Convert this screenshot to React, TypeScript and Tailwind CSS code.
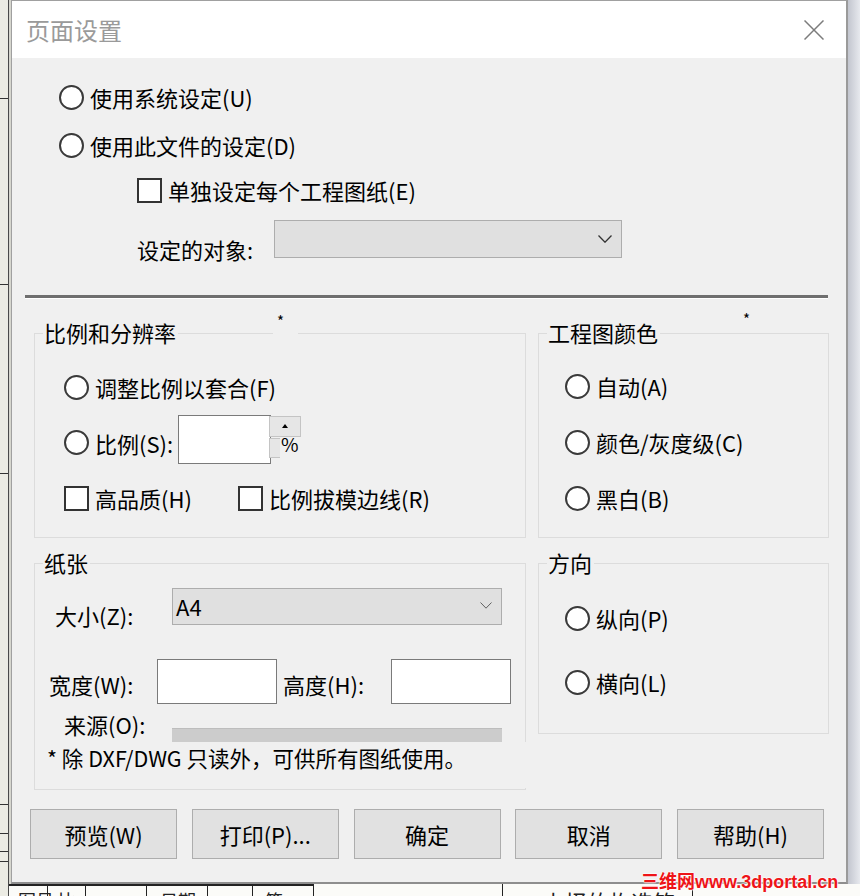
import React from "react";

const FONT = "font-['Noto_Sans_CJK_SC','Noto_Sans',sans-serif]";

function Radio({ label }: { label: string }) {
  return (
    <div className="flex items-center h-[26px]">
      <span className="block w-[25px] h-[25px] rounded-full border-2 border-[#3a3a3a] bg-white shrink-0" />
      <span className="ml-[6px] text-[22px] leading-[26px] text-black whitespace-nowrap">{label}</span>
    </div>
  );
}

function Check({ label }: { label: string }) {
  return (
    <div className="flex items-center h-[26px]">
      <span className="block w-[25px] h-[25px] border-2 border-[#333] bg-white shrink-0" />
      <span className="ml-[6px] text-[22px] leading-[26px] text-black whitespace-nowrap">{label}</span>
    </div>
  );
}

function Chevron({ w, h, color, sw }: { w: number; h: number; color: string; sw: number }) {
  return (
    <svg width={w} height={h} viewBox={`0 0 ${w} ${h}`} className="shrink-0">
      <polyline points={`0.5,0.5 ${w / 2},${h - 0.8} ${w - 0.5},0.5`} fill="none" stroke={color} strokeWidth={sw} />
    </svg>
  );
}

function Group({
  title,
  className,
  children,
}: {
  title: string;
  className: string;
  children: React.ReactNode;
}) {
  return (
    <div className={`relative border border-[#dcdcdc] ${className}`}>
      <span className="absolute left-[8px] top-[-14px] bg-[#f0f0f0] pl-px pr-[2px] text-[22px] leading-[24px] text-black">
        {title}
      </span>
      {children}
    </div>
  );
}

function Button({ label }: { label: string }) {
  return (
    <div className="w-[147px] h-[50px] flex items-center justify-center bg-[#e1e1e1] border border-[#adadad] text-[22px] leading-[26px] text-black">
      {label}
    </div>
  );
}

export default function App() {
  return (
    <div className={`relative w-[860px] h-[896px] overflow-hidden bg-[#ecece4] ${FONT}`}>
      {/* drawing sheet behind the dialog */}
      <div className="absolute left-[8px] top-0 w-px h-[896px] bg-[#4a4a4a]" />
      <div className="absolute left-[9px] top-0 w-[2px] h-[896px] bg-[#d6d6ce]" />
      <div className="absolute left-0 top-[98px] w-[8px] h-px bg-[#333]" />
      <div className="absolute left-0 top-[284px] w-[8px] h-px bg-[#333]" />
      <div className="absolute left-0 top-[473px] w-[8px] h-px bg-[#333]" />
      <div className="absolute left-0 top-[804px] w-[8px] h-px bg-[#333]" />
      <div className="absolute left-0 top-[833px] w-[8px] h-px bg-[#333]" />
      <div className="absolute left-0 top-[851px] w-[8px] h-px bg-[#333]" />
      <div className="absolute left-0 top-[861px] w-[8px] h-px bg-[#333]" />
      <div className="absolute left-[692px] top-0 w-px h-[3px] bg-[#333]" />
      <div className="absolute left-[711px] top-0 w-px h-[3px] bg-[#333]" />

      <div className="absolute left-[9px] top-[884px] w-[851px] h-[12px] bg-[#fbfbf8]" />
      <div className="absolute left-[9px] top-[884px] w-[304px] h-[2px] bg-[#222]" />
      <div className="absolute left-[47px] top-[884px] w-px h-[12px] bg-[#222]" />
      <div className="absolute left-[85px] top-[884px] w-px h-[12px] bg-[#222]" />
      <div className="absolute left-[146px] top-[884px] w-px h-[12px] bg-[#222]" />
      <div className="absolute left-[207px] top-[884px] w-px h-[12px] bg-[#222]" />
      <div className="absolute left-[252px] top-[884px] w-px h-[12px] bg-[#222]" />
      <div className="absolute left-[313px] top-[884px] w-px h-[12px] bg-[#222]" />
      <div className="absolute left-[502px] top-[884px] w-px h-[12px] bg-[#222]" />
      <div className="absolute left-[692px] top-[884px] w-px h-[12px] bg-[#222]" />
      <div className="absolute left-[18px] top-[889px] text-[18px] leading-[22px] text-[#222] whitespace-nowrap">图号</div>
      <div className="absolute left-[58px] top-[889px] text-[18px] leading-[22px] text-[#222] whitespace-nowrap">比</div>
      <div className="absolute left-[160px] top-[889px] text-[18px] leading-[22px] text-[#222] whitespace-nowrap">日期</div>
      <div className="absolute left-[265px] top-[889px] text-[18px] leading-[22px] text-[#222] whitespace-nowrap">签</div>
      <div className="absolute left-[543px] top-[888px] text-[22px] leading-[26px] text-[#222] whitespace-nowrap">上择的构造筑</div>

      {/* window shadow on the right */}
      <div className="absolute left-[848px] top-0 w-[12px] h-[884px] bg-gradient-to-r from-[#c3c6cf] to-[#e7e9ee]" />

      {/* dialog window */}
      <div className="relative ml-[11px] w-[837px] h-[884px] flex flex-col border-l border-t border-[#a0a0a0] border-r-2 border-r-[#9a9a9a] border-b-2 border-b-[#8e8e8e]">
        <div className="h-[57px] bg-white flex items-center justify-between pl-[14px] pr-[22px] shrink-0">
          <span className="text-[24px] leading-[30px] text-[#9a9a9a] mt-px">页面设置</span>
          <svg width="20" height="20" viewBox="0 0 20 20" className="mt-[1px]">
            <line x1="0.5" y1="0.5" x2="19.5" y2="19.5" stroke="#7c7c7c" strokeWidth="1.5" />
            <line x1="19.5" y1="0.5" x2="0.5" y2="19.5" stroke="#7c7c7c" strokeWidth="1.5" />
          </svg>
        </div>

        <div className="flex-1 bg-[#f0f0f0] flex flex-col">
          <div className="pt-[26px] pl-[47px]">
            <Radio label="使用系统设定(U)" />
          </div>
          <div className="mt-[22px] pl-[47px]">
            <Radio label="使用此文件的设定(D)" />
          </div>
          <div className="mt-[19px] pl-[125px]">
            <Check label="单独设定每个工程图纸(E)" />
          </div>
          <div className="mt-[17px] pl-[125px] flex items-start h-[38px]">
            <span className="w-[137px] pt-[16px] text-[22px] leading-[26px] text-black">设定的对象:</span>
            <div className="w-[348px] h-[38px] bg-[#e0e0e0] border border-[#adadad] flex items-center justify-end pr-[9px]">
              <Chevron w={14} h={8} color="#333" sw={1.3} />
            </div>
          </div>

          <div className="mt-[37px] ml-[13px] w-[803px] h-[4px] bg-[#6f6f6f] border-b border-white" />

          <div className="mt-[34px] ml-[22px] flex gap-[12px]">
            <Group title="比例和分辨率" className="w-[492px] h-[205px] pt-[40px] pl-[29px]">
              <span className="absolute left-[238px] top-[-23px] w-[25px] h-[26px] bg-[#f0f0f0] pl-[4px] text-[15px] leading-[20px] text-black">*</span>
              <Radio label="调整比例以套合(F)" />
              <div className="mt-[15px] flex items-center h-[49px]">
                <div className="w-[114px] mt-[6px]">
                  <Radio label="比例(S):" />
                </div>
                <div className="relative flex">
                  <div className="w-[93px] h-[49px] bg-white border border-[#7a7a7a]" />
                  <div className="relative -ml-[2px] mt-px flex flex-col gap-px">
                    <div className="w-[32px] h-[21px] bg-[#e6e6e6] border border-[#c4c4c4] flex items-start justify-center pt-[7px]">
                      <span className="block w-0 h-0 border-l-[3px] border-r-[3px] border-b-[4px] border-l-transparent border-r-transparent border-b-black" />
                    </div>
                    <div className="w-[32px] h-[20px] bg-[#e6e6e6] border border-[#c4c4c4]" />
                    <span className="absolute left-[11px] top-[21px] w-[22px] h-[22px] bg-[#f0f0f0] text-[19px] leading-[14px] text-black pl-px">%</span>
                  </div>
                </div>
              </div>
              <div className="mt-[21px] flex">
                <div className="w-[174px]">
                  <Check label="高品质(H)" />
                </div>
                <Check label="比例拔模边线(R)" />
              </div>
            </Group>

            <Group title="工程图颜色" className="w-[291px] h-[205px] pt-[39px] pl-[26px]">
              <span className="absolute left-[204px] top-[-25px] text-[15px] leading-[20px] text-black">*</span>
              <div className="flex flex-col gap-[30px]">
                <Radio label="自动(A)" />
                <Radio label="颜色/灰度级(C)" />
                <Radio label="黑白(B)" />
              </div>
            </Group>
          </div>

          <div className="mt-[25px] ml-[22px] flex items-start gap-[12px]">
            <Group title="纸张" className="w-[492px] h-[227px] pt-[24px] flex flex-col">
              <div className="flex items-start h-[37px] pl-[20px]">
                <span className="w-[117px] pt-[14px] text-[22px] leading-[26px] text-black">大小(Z):</span>
                <div className="w-[330px] h-[37px] bg-[#e0e0e0] border border-[#adadad] flex items-start justify-between pl-[3px] pr-[9px]">
                  <span className="text-[22px] leading-[26px] text-black pt-[4px]">A4</span>
                  <div className="self-center mt-[-2px]">
                    <Chevron w={12} h={7} color="#606060" sw={1} />
                  </div>
                </div>
              </div>
              <div className="mt-[34px] flex items-center pl-[14px]">
                <span className="w-[108px] text-[22px] leading-[26px] text-black mt-[4px]">宽度(W):</span>
                <div className="w-[120px] h-[45px] bg-white border border-[#7a7a7a]" />
                <span className="ml-[6px] w-[108px] text-[22px] leading-[26px] text-black mt-[4px]">高度(H):</span>
                <div className="w-[120px] h-[45px] bg-white border border-[#7a7a7a]" />
              </div>
              <div className="mt-[7px] h-[31px] flex items-start pl-[29px] overflow-hidden">
                <span className="w-[108px] text-[22px] leading-[26px] text-black">来源(O):</span>
                <div className="mt-[17px] w-[330px] h-[20px] bg-[#cccccc] border-t border-[#bdbdbd]" />
              </div>
              <div className="-mr-px h-[46px] bg-[#f0f0f0] pl-[12px] pt-[3px]">
                <span className="text-[21.5px] leading-[26px] text-black whitespace-nowrap">* 除 DXF/DWG 只读外，可供所有图纸使用。</span>
              </div>
            </Group>

            <Group title="方向" className="w-[291px] h-[171px] pt-[41px] pl-[26px]">
              <div className="flex flex-col gap-[38px]">
                <Radio label="纵向(P)" />
                <Radio label="横向(L)" />
              </div>
            </Group>
          </div>

          <div className="mt-[19px] pl-[18px] flex gap-[14.75px]">
            <Button label="预览(W)" />
            <Button label="打印(P)..." />
            <Button label="确定" />
            <Button label="取消" />
            <Button label="帮助(H)" />
          </div>
        </div>
      </div>

      {/* site watermark in the corner */}
      <div className="absolute left-[641px] top-[872px] text-[18px] leading-[20px] font-bold text-[#ee1418] whitespace-nowrap font-['Liberation_Sans','Noto_Sans_CJK_SC',sans-serif] [text-shadow:0_0_2px_#fff,0_0_2px_#fff,0_0_1px_#fff,0_0_1px_#fff]">
        三维网www.3dportal.cn
      </div>
    </div>
  );
}
